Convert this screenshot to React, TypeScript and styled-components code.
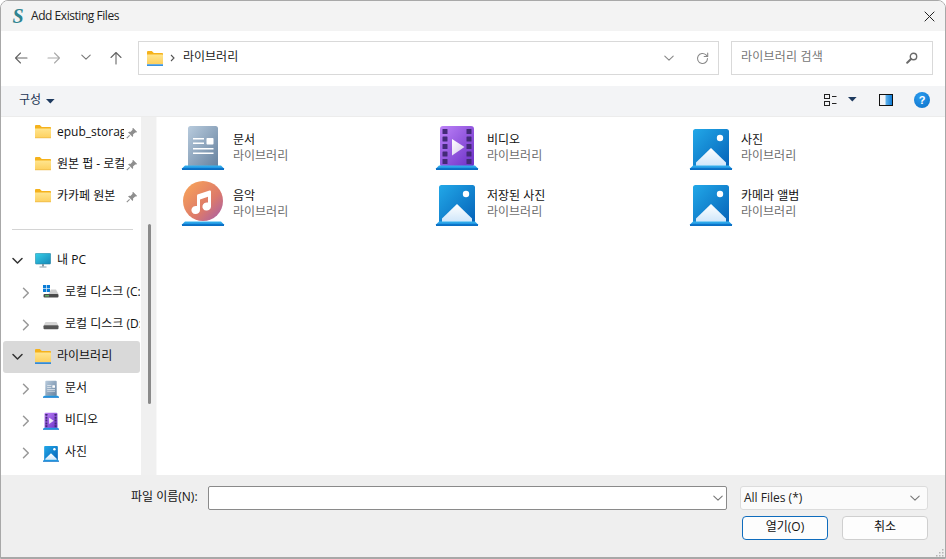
import React from "react";
import styled, { createGlobalStyle } from "styled-components";

const Global = createGlobalStyle`
  html, body { margin: 0; padding: 0; background: #fff; }
  * { box-sizing: border-box; }
`;

const FONT = `"Open Sans", "Noto Sans CJK KR", sans-serif`;

const Win = styled.div`
  width: 946px; height: 559px; display: flex; flex-direction: column; overflow: hidden; position: relative;
  border: 1px solid #a8a8a8; border-radius: 8px 8px 0 0; font-family: ${FONT}; font-size: 12px; color: #111; background: #fff;
`;
const TitleBar = styled.div`
  height: 30px; flex: none; background: #f3f3f3; display: flex; align-items: center; padding: 0 10px 0 11px;
`;
const Logo = styled.span`
  width: 12px; margin-right: 7px; font: italic bold 20px/20px "Liberation Serif", serif; color: #2f8490; text-align: center;
`;
const Title = styled.span`
  flex: 1; font-size: 12px; line-height: 16px; letter-spacing: -0.45px; color: #222;
`;
const NavBar = styled.div`
  height: 55px; flex: none; background: #fff; display: flex; align-items: center; padding: 0 12px 0 0; 
`;
const NavBtn = styled.button<{ $w: number }>`
  width: ${p => p.$w}px; height: 34px; flex: none; padding: 0; border: 0; background: none; display: flex; align-items: center; justify-content: center;
`;
const NavButtons = styled.div`
  width: 137px; flex: none; display: flex; padding-left: 4px; margin-top: -2px;
`;
const Address = styled.div`
  flex: none; width: 581px; height: 34px; border: 1px solid #d9d9d9; display: flex; align-items: center; padding: 0 9px 0 8px; margin-top: -1px;
`;
const AddrText = styled.span`
  flex: 1; line-height: 16px; color: #222; margin-left: 8px; margin-top: -2px;
`;
const Search = styled.div`
  flex: none; width: 202px; height: 34px; margin-left: 12px; margin-top: -1px; border: 1px solid #d9d9d9; display: flex; align-items: center; padding: 0 14px 0 9px;
`;
const SearchText = styled.span`
  flex: 1; color: #767676; line-height: 16px; margin-top: -2px; letter-spacing: 0.2px;
`;
const Toolbar = styled.div`
  height: 31px; flex: none; background: #f3f4f6; display: flex; align-items: center; padding: 0 15px 0 18px; color: #1e3a5f;
  border-bottom: 1px solid #ececec;
`;
const ToolLabel = styled.span`
  line-height: 16px; margin-right: 5px; margin-top: -3px; color: #1b3454;
`;
const Spacer = styled.div`flex: 1;`;
const ToolIcons = styled.div`
  display: flex; align-items: center; margin-top: -3px;
`;
const Main = styled.div`
  flex: 1; min-height: 0; display: flex; background: #fff;
`;
const Side = styled.div`
  width: 140px; flex: none; overflow: hidden; padding: 0 0 0 2px;
`;
const Row = styled.div<{ $selected?: boolean; $level: number }>`
  height: 32px; width: 137px; display: flex; align-items: center; border-radius: 3px; white-space: nowrap; overflow: hidden;
  padding-left: ${p => (p.$level === 1 ? 17 : 9)}px; background: ${p => (p.$selected ? "#d9d9d9" : "transparent")};
`;
const Chev = styled.span`
  width: 13px; height: 16px; flex: none; display: flex; align-items: center; justify-content: center; margin-right: 11px; margin-left: -1px;
`;
const NoChev = styled.span`width: 23px; flex: none;`;
const RowIcon = styled.span`
  width: 16px; flex: none; display: flex; margin-right: 6px; margin-top: -1px;
`;
const RowName = styled.span<{ $clip?: boolean }>`
  line-height: 16px; color: #111; margin-top: -2px; overflow: hidden; ${p => (p.$clip ? "width: 67px; flex: none;" : "")}
`;
const Pin = styled.span`
  width: 12px; flex: none; margin-left: 2px; display: flex;
`;
const DividerBlock = styled.div`
  height: 32px; display: flex; align-items: center; padding-left: 9px;
`;
const Divider = styled.div`
  width: 121px; height: 1px; background: #d4d4d4;
`;
const Track = styled.div`
  width: 16px; flex: none; background: #f0f0f0; padding: 107px 0 0 7px; border-right: 1px solid #f8f8f8;
`;
const Thumb = styled.div`
  width: 3px; height: 180px; background: #8a8a8a; border-radius: 2px;
`;
const Content = styled.div`
  flex: 1; display: grid; grid-template-columns: repeat(3, 254px); grid-auto-rows: 56px; align-content: start; padding: 9px 0 0 25px;
`;
const Item = styled.div`
  display: flex; gap: 9px; height: 44px; align-items: flex-start;
`;
const ItemText = styled.div`
  display: flex; flex-direction: column; padding-top: 6px;
`;
const ItemName = styled.span`
  line-height: 16px; color: #111;
`;
const ItemSub = styled.span`
  line-height: 16px; color: #6e6e6e;
`;
const Footer = styled.div`
  height: 83px; flex: none; background: #efefef; display: flex; flex-direction: column; padding: 11px 17px 0 130px; border-bottom: 1px solid #a8a8a8;
`;
const FootRow = styled.div`
  display: flex; align-items: center; height: 24px;
`;
const FileLabel = styled.span`
  width: 77px; flex: none; line-height: 16px; color: #111; margin-top: -2px;
`;
const FileInput = styled.div`
  width: 519px; height: 24px; flex: none; background: #fff; border: 1px solid #8a8a8a; border-radius: 2px; display: flex; align-items: center; justify-content: flex-end; padding-right: 3px;
`;
const Filter = styled.div`
  width: 188px; height: 24px; flex: none; margin-left: 13px; background: #fbfbfb; border: 1px solid #dcdcdc; border-radius: 3px; display: flex; align-items: center; justify-content: space-between; padding: 0 7px 0 3px; line-height: 16px; color: #222;
`;
const Buttons = styled.div`
  display: flex; gap: 14px; justify-content: flex-end; margin-top: 6px; padding-right: 0;
`;
const Btn = styled.button<{ $primary?: boolean }>`
  width: 86px; height: 24px; padding: 0 0 2px; font-family: ${FONT}; font-size: 12px; line-height: 16px; color: #111; background: #fdfdfd;
  border-radius: 4px; border: ${p => (p.$primary ? "1.5px solid #0f6cbd" : "1px solid #cfcfcf")};
`;
const Grip = styled.svg`
  position: absolute; right: 1px; bottom: 1px;
`;

const stroke = { fill: "none", strokeLinecap: "round" as const, strokeLinejoin: "round" as const };

const Arrow = ({ c, rot }: { c: string; rot: number }) => (
  <svg width="14" height="14" viewBox="0 0 14 14" style={{ transform: `rotate(${rot}deg)` }}>
    <path d="M1.5 7H13M6.5 2 1.5 7l5 5" stroke={c} strokeWidth="1.1" {...stroke} />
  </svg>
);
const SmallDown = ({ c = "#777", w = 10 }: { c?: string; w?: number }) => (
  <svg width={w} height="7" viewBox="0 0 10 7"><path d="M.8 1.2 5 5.2l4.2-4" stroke={c} strokeWidth="1.1" {...stroke} /></svg>
);
const TreeDown = () => (
  <svg width="11" height="8" viewBox="0 0 11 8"><path d="M1 1.5 5.5 6 10 1.5" stroke="#333" strokeWidth="1.5" {...stroke} /></svg>
);
const TreeRight = () => (
  <svg width="8" height="12" viewBox="0 0 8 12"><path d="M1.5 1.2 6.3 6l-4.8 4.8" stroke="#999" strokeWidth="1.5" {...stroke} /></svg>
);
const Caret = () => (
  <svg width="9" height="5" viewBox="0 0 9 5"><path d="M0 0h8.6L4.3 4.6z" fill="#1e3a5f" /></svg>
);

const Folder = ({ bar }: { bar?: boolean }) => (
  <svg width="16" height="15" viewBox="0 0 16 15">
    <defs>
      <linearGradient id="fg" x1="0" y1="0" x2="0" y2="1">
        <stop offset="0" stopColor="#ffe58f" /><stop offset="1" stopColor="#fdd05e" />
      </linearGradient>
    </defs>
    <path d="M0 1.2C0 .5.5 0 1.2 0h3.6l2 2H15c.6 0 1 .4 1 1v2H0z" fill="#f5b21c" />
    <path d="M0 3.4h15c.6 0 1 .4 1 1V13H0z" fill="url(#fg)" />
    {bar ? <rect y="13.4" width="16" height="1.4" fill="#0a78d4" /> : <rect y="12.6" width="16" height=".6" fill="#e8b23c" />}
  </svg>
);
const PinIcon = () => (
  <svg width="12" height="12" viewBox="0 0 12 12">
    <path d="M7 .8 11.2 5l-1 .6-1-.2L7 7.6c.3 1 .2 1.8-.4 2.4L2 5.3c.7-.6 1.5-.7 2.4-.4l2.2-2.2-.2-1z" fill="#8e8e8e" />
    <path d="M3.6 8.4.8 11.2" stroke="#8e8e8e" strokeWidth="1.1" fill="none" />
  </svg>
);
const Monitor = () => (
  <svg width="16" height="15" viewBox="0 0 16 15">
    <defs>
      <linearGradient id="mon" x1="0" y1="0" x2="1" y2="1">
        <stop offset="0" stopColor="#35d0e8" /><stop offset="1" stopColor="#1787b8" />
      </linearGradient>
    </defs>
    <rect x=".3" y=".3" width="15.4" height="10.8" rx="1" fill="url(#mon)" stroke="#2a7d98" strokeWidth=".5" />
    <rect x="7" y="11" width="2" height="2.6" fill="#8a9aa5" />
    <rect x="4.5" y="13.4" width="7" height="1.2" fill="#9fb0ba" />
  </svg>
);
const Disk = ({ win }: { win?: boolean }) => (
  <svg width="16" height="15" viewBox="0 0 16 15">
    {win && (
      <g fill="#0a7cd6">
        <rect x="0" y="0" width="3.2" height="3.2" /><rect x="3.8" y="0" width="3.2" height="3.2" />
        <rect x="0" y="3.8" width="3.2" height="3.2" /><rect x="3.8" y="3.8" width="3.2" height="3.2" />
      </g>
    )}
    {win ? (
      <>
        <path d="M8 4.5h5L15.5 9h-10z" fill="#c9c9c9" opacity={0.9} />
        <rect x="0.5" y="9" width="15" height="3.6" rx="1" fill="#4a4a4a" />
        <rect x="2" y="10.2" width="4" height="1.2" fill="#67c26b" />
      </>
    ) : (
      <>
        <path d="M2.5 5h11l2 3.5H.5z" fill="#d5d5d5" />
        <rect x="0.5" y="8.2" width="15" height="4" rx="1" fill="#555" />
      </>
    )}
  </svg>
);

const Shelf = ({ id }: { id: string }) => (
  <>
    <path d="M3 39.6h36l3 3V44H0v-1.4z" fill={`url(#${id})`} />
    <rect y="42.2" width="42" height="1.8" fill="#0a6fc4" />
  </>
);
const ShelfGrad = ({ id }: { id: string }) => (
  <linearGradient id={id} x1="0" y1="0" x2="0" y2="1">
    <stop offset="0" stopColor="#37b4ef" /><stop offset="1" stopColor="#0a78d4" />
  </linearGradient>
);

type IconProps = { w?: number; uid: string };
const iconSize = (w: number) => ({ width: w, height: (w * 46) / 42, viewBox: "0 -2 42 46" });

const DocIcon = ({ w = 42, uid }: IconProps) => (
  <svg {...iconSize(w)} style={{ marginTop: w === 42 ? -2 : 0, overflow: "visible" }}>
    <defs>
      <linearGradient id={uid} x1="0" y1="0" x2="1" y2="1">
        <stop offset="0" stopColor="#b8cbdd" /><stop offset="1" stopColor="#67829f" />
      </linearGradient>
      <ShelfGrad id={uid + "s"} />
    </defs>
    <path d="M6 2.5A2.5 2.5 0 0 1 8.5 0h25A2.5 2.5 0 0 1 36 2.500V40H6z" fill={`url(#${uid})`} />
    <g fill="#fff">
      <rect x="11" y="12" width="11" height="1.5" /><rect x="11" y="16.500" width="11" height="1.5" />
      <rect x="24.500" y="12" width="7" height="6.500" rx=".8" />
      <rect x="11" y="22" width="20.500" height="1.500" /><rect x="11" y="26.500" width="20.500" height="1.500" />
    </g>
    <Shelf id={uid + "s"} />
  </svg>
);
const MusicIcon = ({ w = 42, uid }: IconProps) => (
  <svg {...iconSize(w)} style={{ marginTop: -2, overflow: "visible" }}>
    <defs>
      <linearGradient id={uid} x1="0" y1="0" x2="1" y2="1">
        <stop offset="0.1" stopColor="#f6a05a" /><stop offset="0.6" stopColor="#dd7a6a" /><stop offset="1" stopColor="#a25cae" />
      </linearGradient>
      <ShelfGrad id={uid + "s"} />
    </defs>
    <circle cx="21" cy="19" r="20" fill={`url(#${uid})`} />
    <path d="M15.500 12.500 27.500 8.500c.8-.2 1.500.3 1.500 1.200V24.500a4.300 4.100 0 1 1-3-3.900V14.800l-8 2.600V28a4.300 4.100 0 1 1-3-3.900V14c0-.7.300-1.300.500-1.500z" fill="#fff" />
    <Shelf id={uid + "s"} />
  </svg>
);
const VideoIcon = ({ w = 42, uid }: IconProps) => {
  const holes = [3, 10.500, 18, 25.500, 33];
  return (
    <svg {...iconSize(w)} style={{ marginTop: w === 42 ? -2 : 0, overflow: "visible" }}>
      <defs>
        <linearGradient id={uid} x1="0" y1="0" x2="1" y2="1">
          <stop offset="0" stopColor="#bd82f8" /><stop offset="1" stopColor="#6a2ec6" />
        </linearGradient>
        <linearGradient id={uid + "p"} x1="0" y1="0" x2="1" y2="1">
          <stop offset="0" stopColor="#ffffff" /><stop offset="1" stopColor="#d5c8ea" />
        </linearGradient>
        <ShelfGrad id={uid + "s"} />
      </defs>
      <rect x="4" y="0" width="34" height="41" rx="3" fill={`url(#${uid})`} />
      {holes.map(y => (
        <g key={y} fill="#432a78">
          <rect x="6.500" y={y} width="5" height="5" rx=".6" /><rect x="30.500" y={y} width="5" height="5" rx=".6" />
        </g>
      ))}
      <path d="M16 13v16.500L28.500 21z" fill={`url(#${uid + "p"})`} />
      <Shelf id={uid + "s"} />
    </svg>
  );
};
const PhotoIcon = ({ w = 42, uid }: IconProps) => (
  <svg {...iconSize(w)} style={{ marginTop: w === 42 ? -2 : 0, overflow: "visible" }}>
    <defs>
      <linearGradient id={uid} x1="0" y1="0" x2="1" y2="1">
        <stop offset="0" stopColor="#22a8e8" /><stop offset="1" stopColor="#0562b8" />
      </linearGradient>
      <linearGradient id={uid + "m"} x1="0" y1="0" x2="0" y2="1">
        <stop offset="0" stopColor="#ffffff" /><stop offset="1" stopColor="#cfe6fa" />
      </linearGradient>
      <ShelfGrad id={uid + "s"} />
    </defs>
    <path d="M3 5.500A2.500 2.500 0 0 1 5.500 3h31A2.500 2.500 0 0 1 39 5.500V41H3z" fill={`url(#${uid})`} />
    <circle cx="30" cy="12" r="3.200" fill="#fff" />
    <path d="M21 22 36 36.500V40H6v-3.500z" fill={`url(#${uid + "m"})`} />
    <Shelf id={uid + "s"} />
  </svg>
);

const Refresh = () => (
  <svg width="13" height="13" viewBox="0 0 13 13">
    <path d="M11.500 6.500a5 5 0 1 1-1.500-3.600L11.500 4.300" stroke="#8a8a8a" strokeWidth="1.100" {...stroke} />
    <path d="M11.700 1v3.500H8.200" stroke="#8a8a8a" strokeWidth="1.100" {...stroke} />
  </svg>
);
const Magnifier = () => (
  <svg width="12" height="12" viewBox="0 0 12 12">
    <circle cx="7.500" cy="4.500" r="3.200" stroke="#6a6a6a" strokeWidth="1.400" fill="none" />
    <path d="M5 7 1.200 10.800" stroke="#6a6a6a" strokeWidth="2" strokeLinecap="round" />
  </svg>
);
const ViewIcon = () => (
  <svg width="13" height="14" viewBox="0 0 13 14">
    <g stroke="#222" fill="none">
      <rect x=".5" y="1.500" width="5" height="4" /><rect x=".5" y="8.500" width="5" height="4" />
    </g>
    <path d="M8 3.500h4.500M8 10.500h4.500" stroke="#222" />
  </svg>
);
const PaneIcon = () => (
  <svg width="14" height="12" viewBox="0 0 14 12">
    <defs>
      <linearGradient id="pane" x1="0" y1="0" x2="1" y2="0">
        <stop offset="0" stopColor="#63b5ee" /><stop offset="1" stopColor="#0a78d4" />
      </linearGradient>
    </defs>
    <rect x="6.500" y=".5" width="7" height="11" fill="url(#pane)" />
    <rect x=".5" y=".5" width="13" height="11" stroke="#111" fill="none" />
  </svg>
);
const HelpText = styled.span`
  width: 16px; height: 16px; border-radius: 50%; background: radial-gradient(circle at 40% 30%, #2a9cf0, #0b6fc6); color: #fff;
  font: bold 11px/16px "Liberation Sans", sans-serif; text-align: center; display: block;
`;
const Close = () => (
  <svg width="11" height="11" viewBox="0 0 11 11"><path d="M.7.700l9.600 9.600M10.300.700.700 10.300" stroke="#222" strokeWidth="1" fill="none" /></svg>
);

const items = [
  ["문서", DocIcon], ["비디오", VideoIcon], ["사진", PhotoIcon],
  ["음악", MusicIcon], ["저장된 사진", PhotoIcon], ["카메라 앨범", PhotoIcon],
] as const;

export default function App() {
  return (
    <Win>
      <Global />
      <TitleBar>
        <Logo>S</Logo>
        <Title>Add Existing Files</Title>
        <Close />
      </TitleBar>
      <NavBar>
        <NavButtons>
          <NavBtn $w={32}><Arrow c="#666" rot={0} /></NavBtn>
          <NavBtn $w={34}><Arrow c="#aaa" rot={180} /></NavBtn>
          <NavBtn $w={30}><SmallDown /></NavBtn>
          <NavBtn $w={30}><Arrow c="#666" rot={90} /></NavBtn>
        </NavButtons>
        <Address>
          <Folder bar />
          <svg width="5" height="8" viewBox="0 0 5 8" style={{ marginLeft: 7 }}><path d="M1 1l3 3-3 3" stroke="#555" strokeWidth="1.100" fill="none" /></svg>
          <AddrText>라이브러리</AddrText>
          <SmallDown c="#888" />
          <span style={{ width: 22 }} />
          <Refresh />
        </Address>
        <Search>
          <SearchText>라이브러리 검색</SearchText>
          <Magnifier />
        </Search>
      </NavBar>
      <Toolbar>
        <ToolLabel>구성</ToolLabel>
        <span style={{ marginTop: -3 }}><Caret /></span>
        <Spacer />
        <ToolIcons>
          <ViewIcon />
          <span style={{ width: 11 }} />
          <Caret />
          <span style={{ width: 22 }} />
          <PaneIcon />
          <span style={{ width: 21 }} />
          <HelpText>?</HelpText>
        </ToolIcons>
      </Toolbar>
      <Main>
        <Side>
          <Row $level={0}><NoChev /><RowIcon><Folder /></RowIcon><RowName $clip>epub_storage</RowName><Pin><PinIcon /></Pin></Row>
          <Row $level={0}><NoChev /><RowIcon><Folder /></RowIcon><RowName $clip>원본 펍 - 로컬</RowName><Pin><PinIcon /></Pin></Row>
          <Row $level={0}><NoChev /><RowIcon><Folder /></RowIcon><RowName $clip>카카페 원본</RowName><Pin><PinIcon /></Pin></Row>
          <DividerBlock><Divider /></DividerBlock>
          <Row $level={0}><Chev><TreeDown /></Chev><RowIcon><Monitor /></RowIcon><RowName>내 PC</RowName></Row>
          <Row $level={1}><Chev><TreeRight /></Chev><RowIcon><Disk win /></RowIcon><RowName>로컬 디스크 (C:)</RowName></Row>
          <Row $level={1}><Chev><TreeRight /></Chev><RowIcon><Disk /></RowIcon><RowName>로컬 디스크 (D:)</RowName></Row>
          <Row $level={0} $selected><Chev><TreeDown /></Chev><RowIcon><Folder bar /></RowIcon><RowName>라이브러리</RowName></Row>
          <Row $level={1}><Chev><TreeRight /></Chev><RowIcon><DocIcon w={16} uid="sd" /></RowIcon><RowName>문서</RowName></Row>
          <Row $level={1}><Chev><TreeRight /></Chev><RowIcon><VideoIcon w={16} uid="sv" /></RowIcon><RowName>비디오</RowName></Row>
          <Row $level={1}><Chev><TreeRight /></Chev><RowIcon><PhotoIcon w={16} uid="sp" /></RowIcon><RowName>사진</RowName></Row>
        </Side>
        <Track><Thumb /></Track>
        <Content>
          {items.map(([name, Icon], i) => (
            <Item key={i}>
              <Icon uid={"it" + i} />
              <ItemText>
                <ItemName>{name}</ItemName>
                <ItemSub>라이브러리</ItemSub>
              </ItemText>
            </Item>
          ))}
        </Content>
      </Main>
      <Footer>
        <FootRow>
          <FileLabel>파일 이름(N):</FileLabel>
          <FileInput><SmallDown /></FileInput>
          <Filter>All Files (*)<SmallDown /></Filter>
        </FootRow>
        <Buttons>
          <Btn $primary>열기(O)</Btn>
          <Btn>취소</Btn>
        </Buttons>
      </Footer>
      <Grip width="8" height="8" viewBox="0 0 8 8">
        <g fill="#b5b5b5">
          <rect x="6" y="0" width="1.500" height="1.500" /><rect x="3" y="3" width="1.500" height="1.500" /><rect x="6" y="3" width="1.500" height="1.500" />
          <rect x="0" y="6" width="1.500" height="1.500" /><rect x="3" y="6" width="1.500" height="1.500" /><rect x="6" y="6" width="1.500" height="1.500" />
        </g>
      </Grip>
    </Win>
  );
}
